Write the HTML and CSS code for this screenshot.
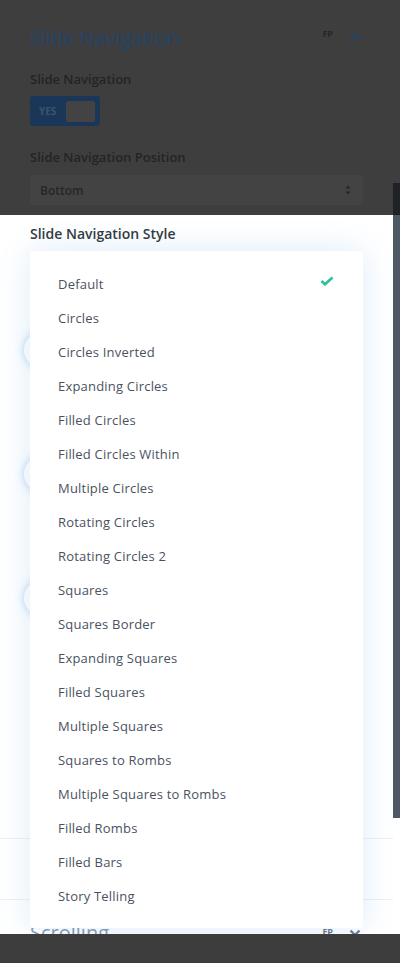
FILE: index.html
```html
<!DOCTYPE html>
<html>
<head>
<meta charset="utf-8">
<link rel="stylesheet" href="styles.css">
</head>
<body>
<div class="dim-top">
  <div class="section-head">
    <span class="section-title">Slide Navigation</span>
    <div class="head-tools">
      <span class="fp">FP</span>
      <svg class="chev" width="12" height="8" viewBox="0 0 12 8"><path d="M1.5 6.5 L6 2 L10.5 6.5" fill="none" stroke="#24446a" stroke-width="2.4"/></svg>
    </div>
  </div>
  <div class="dim-label">Slide Navigation</div>
  <div class="toggle"><span class="yes">YES</span><span class="knob"></span></div>
  <div class="dim-label gap-lg">Slide Navigation Position</div>
  <div class="select">
    <span>Bottom</span>
    <svg width="6" height="12" viewBox="0 0 6 12"><path d="M0.5 4.5 L3 1.5 L5.5 4.5 Z M0.5 7.5 L3 10.5 L5.5 7.5 Z" fill="#262626"/></svg>
  </div>
  <div class="scroll-stub"></div>
</div>

<div class="main">
  <div class="main-label">Slide Navigation Style</div>
  <div class="bg-content">
    <span class="bubble"></span>
    <span class="bubble"></span>
    <span class="bubble"></span>
  </div>
  <div class="rule r1"></div>
  <div class="rule r2"></div>
  <div class="scroll-row">
    <span class="scroll-title">Scrolling</span>
    <div class="head-tools">
      <span class="scroll-fp">FP</span>
      <svg width="12" height="8" viewBox="0 0 12 8"><path d="M1.5 1.5 L6 6 L10.5 1.5" fill="none" stroke="#6b7f96" stroke-width="2.4"/></svg>
    </div>
  </div>
  <div class="scrollbar"></div>

  <ul class="menu">
    <li class="selected">Default<svg class="check" width="14" height="10" viewBox="0 0 14 10"><path d="M1.5 5 L5 8.2 L12.5 1.5" fill="none" stroke="#2fbf9f" stroke-width="2.8"/></svg></li>
    <li>Circles</li>
    <li>Circles Inverted</li>
    <li>Expanding Circles</li>
    <li>Filled Circles</li>
    <li>Filled Circles Within</li>
    <li>Multiple Circles</li>
    <li>Rotating Circles</li>
    <li>Rotating Circles 2</li>
    <li>Squares</li>
    <li>Squares Border</li>
    <li>Expanding Squares</li>
    <li>Filled Squares</li>
    <li>Multiple Squares</li>
    <li>Squares to Rombs</li>
    <li>Multiple Squares to Rombs</li>
    <li>Filled Rombs</li>
    <li>Filled Bars</li>
    <li>Story Telling</li>
  </ul>
</div>

<div class="dim-bottom"></div>
</body>
</html>
```

FILE: styles.css
```css
* { box-sizing: border-box; }
html, body { margin: 0; padding: 0; }
body {
  width: 400px;
  height: 963px;
  overflow: hidden;
  font-family: "Open Sans", "Noto Sans", sans-serif;
  background: #ffffff;
}

.dim-top {
  position: relative;
  height: 215px;
  background: #3e3e3e;
  padding: 24px 37px 0 30px;
}
.section-head {
  display: flex;
  justify-content: space-between;
  align-items: center;
  height: 28px;
}
.section-title {
  font-size: 20px;
  line-height: 28px;
  color: #24446a;
}
.head-tools {
  display: flex;
  align-items: center;
  gap: 16px;
  padding-right: 2px;
}
.fp {
  font-size: 9px;
  font-weight: 700;
  color: #262626;
  margin-top: -10px;
}
.chev { margin-top: -2px; }
.dim-label {
  margin-top: 18px;
  font-size: 13px;
  font-weight: 600;
  line-height: 18px;
  color: #242424;
}
.dim-label.gap-lg { margin-top: 22px; }
.toggle {
  margin-top: 8px;
  width: 70px;
  height: 30px;
  background: #1a375a;
  border-radius: 3px;
  display: flex;
  align-items: center;
  padding: 0 5px 0 9px;
  justify-content: space-between;
}
.yes {
  font-size: 10px;
  font-weight: 700;
  color: #3f536b;
}
.knob {
  width: 29px;
  height: 21px;
  background: #434343;
  border-radius: 2px;
}
.select {
  margin-top: 9px;
  height: 30px;
  background: #434343;
  border-radius: 3px;
  display: flex;
  align-items: center;
  justify-content: space-between;
  padding: 0 12px 0 10px;
  font-size: 12px;
  font-weight: 600;
  color: #262626;
}
.scroll-stub {
  position: absolute;
  right: 0;
  top: 183px;
  width: 7px;
  height: 32px;
  background: #1f2327;
}

.main {
  position: relative;
  height: 719px;
  background: #ffffff;
  padding: 9px 30px 0;
}
.main-label {
  font-size: 14px;
  font-weight: 600;
  line-height: 20px;
  color: #333a40;
}
.bg-content {
  position: absolute;
  left: 24px;
  top: 117px;
  display: flex;
  flex-direction: column;
  gap: 88px;
}
.bubble {
  display: block;
  width: 36px;
  height: 36px;
  border-radius: 50%;
  background: #fff;
  box-shadow: 0 0 8px rgba(43, 135, 218, 0.35);
}
.rule {
  position: absolute;
  left: 0;
  width: 393px;
  height: 1px;
  background: #eef0f3;
}
.r1 { top: 623px; }
.r2 { top: 684px; }
.scroll-row {
  position: absolute;
  left: 30px;
  right: 37px;
  top: 704px;
  display: flex;
  justify-content: space-between;
  align-items: center;
  height: 28px;
  color: #8a9bb0;
}
.scroll-title { font-size: 20px; line-height: 28px; }
.scroll-fp { font-size: 9px; font-weight: 700; color: #6b7480; margin-top: -4px; }
.scrollbar {
  position: absolute;
  right: 0;
  top: 0;
  width: 7px;
  height: 603px;
  background: #4d5966;
}
.menu {
  position: absolute;
  left: 30px;
  top: 36px;
  width: 333px;
  height: 677px;
  margin: 0;
  padding: 16px 0 15px;
  list-style: none;
  background: #ffffff;
  border-radius: 3px;
  box-shadow: 0 0 32px rgba(43, 135, 218, 0.16);
}
.menu li {
  position: relative;
  height: 34px;
  line-height: 34px;
  padding-left: 28px;
  font-size: 13px;
  letter-spacing: 0.2px;
  color: #4a525f;
}
.check {
  position: absolute;
  right: 29px;
  top: 9px;
}
.dim-bottom {
  position: relative;
  z-index: 2;
  height: 29px;
  background: #3d3d3d;
}
```
